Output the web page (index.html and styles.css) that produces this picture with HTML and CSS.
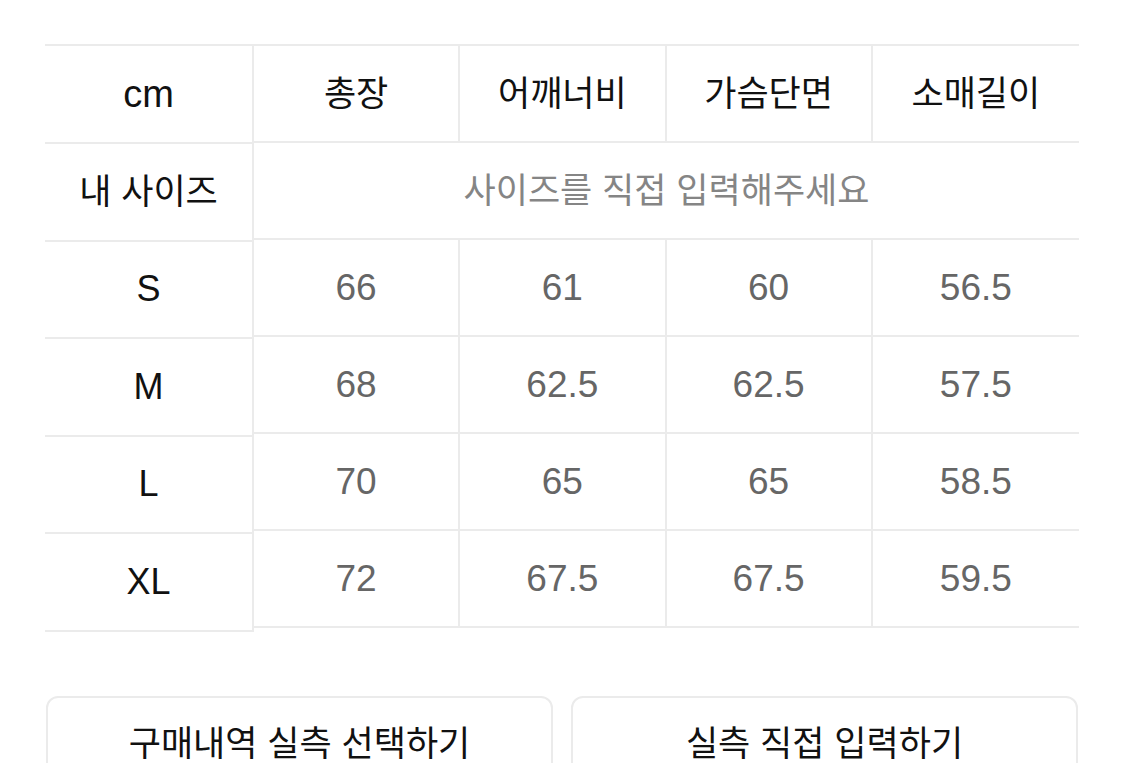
FILE: index.html
```html
<!DOCTYPE html>
<html lang="ko">
<head>
<meta charset="utf-8">
<link rel="stylesheet" href="styles.css">
</head>
<body>
<div class="page">
  <div class="size-table">
    <div class="col-labels">
      <div class="lcell first">cm</div>
      <div class="lcell ko">내 사이즈</div>
      <div class="lcell">S</div>
      <div class="lcell">M</div>
      <div class="lcell">L</div>
      <div class="lcell">XL</div>
    </div>
    <div class="grid">
      <div class="cell head">총장</div>
      <div class="cell head">어깨너비</div>
      <div class="cell head">가슴단면</div>
      <div class="cell head last">소매길이</div>
      <div class="cell span">사이즈를 직접 입력해주세요</div>
      <div class="cell">66</div><div class="cell">61</div><div class="cell">60</div><div class="cell last">56.5</div>
      <div class="cell">68</div><div class="cell">62.5</div><div class="cell">62.5</div><div class="cell last">57.5</div>
      <div class="cell">70</div><div class="cell">65</div><div class="cell">65</div><div class="cell last">58.5</div>
      <div class="cell">72</div><div class="cell">67.5</div><div class="cell">67.5</div><div class="cell last">59.5</div>
    </div>
  </div>
  <div class="buttons">
    <button class="btn">구매내역 실측 선택하기</button>
    <button class="btn">실측 직접 입력하기</button>
  </div>
</div>
</body>
</html>
```
FILE: styles.css
```css
html, body {
  margin: 0;
  padding: 0;
  background: #ffffff;
}
body {
  font-family: "Liberation Sans", "Noto Sans CJK KR", sans-serif;
  overflow: hidden;
  height: 763px;
}
.page {
  padding: 44px 46px 0 45px;
}
.size-table {
  display: flex;
  border-top: 2px solid #ebebeb;
}
.col-labels {
  width: 207px;
  flex: none;
  display: flex;
  flex-direction: column;
  border-right: 2px solid #ebebeb;
}
.lcell {
  height: 95.5px;
  border-bottom: 2px solid #ebebeb;
  display: flex;
  align-items: center;
  justify-content: center;
  font-size: 36px;
  color: #111;
  box-sizing: content-box;
}
.lcell.first {
  height: 96px;
  font-size: 38px;
}
.lcell.ko {
  font-family: "Noto Sans CJK KR", sans-serif;
  font-size: 35px;
  font-weight: 400;
  height: 89.5px;
  padding-bottom: 6px;
}
.grid {
  flex: 1;
  display: grid;
  grid-template-columns: repeat(4, 1fr);
  grid-auto-rows: 97px;
}
.cell {
  border-bottom: 2px solid #ebebeb;
  border-right: 2px solid #ebebeb;
  display: flex;
  align-items: center;
  justify-content: center;
  font-size: 37px;
  color: #666;
  box-sizing: border-box;
}
.cell.last { border-right: none; }
.cell.head {
  font-family: "Noto Sans CJK KR", sans-serif;
  font-weight: 400;
  color: #111;
  font-size: 35px;
  padding-bottom: 6px;
}
.cell.span {
  grid-column: 1 / span 4;
  border-right: none;
  font-family: "Noto Sans CJK KR", sans-serif;
  color: #858585;
  font-size: 35px;
  padding-bottom: 6px;
}
.buttons {
  display: flex;
  gap: 18px;
  margin-top: 64px;
  padding: 0 1px 0 1px;
}
.btn {
  flex: 1;
  height: 100px;
  background: #fff;
  border: 2px solid #ebebeb;
  border-radius: 12px;
  font-family: "Noto Sans CJK KR", sans-serif;
  font-weight: 400;
  font-size: 35px;
  color: #111;
  padding: 0 0 36px 0;
  display: flex;
  align-items: flex-end;
  justify-content: center;
  line-height: 1;
}
```
